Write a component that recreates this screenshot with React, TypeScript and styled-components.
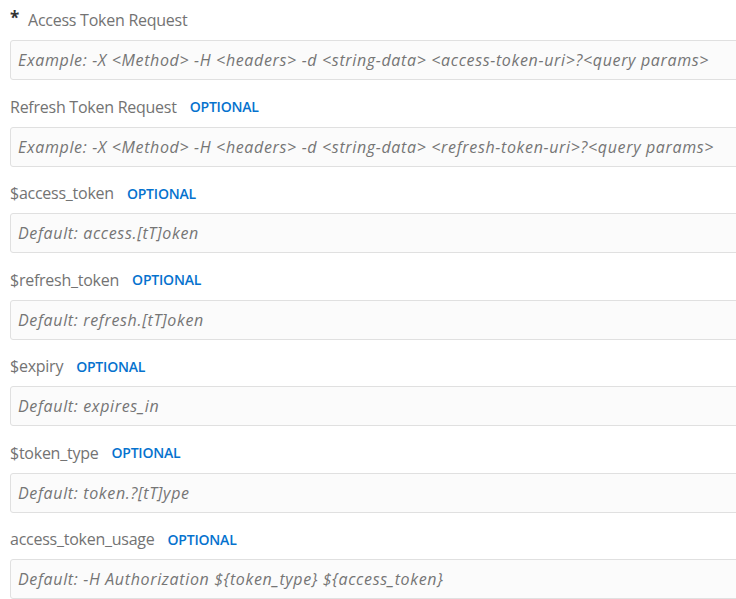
import React from "react";
import styled, { createGlobalStyle } from "styled-components";

const Global = createGlobalStyle`
  html, body { margin: 0; padding: 0; overflow: hidden; background: #ffffff; }
  body { font-family: "Open Sans", "Noto Sans", "Liberation Sans", sans-serif; }
`;

const Page = styled.div`
  padding: 8px 0 0 10px;
  width: 770px;
  display: flex;
  flex-direction: column;
`;

const Field = styled.div`
  display: flex;
  flex-direction: column;
  gap: 8px;
  margin-bottom: 14.5px;
`;

const LabelRow = styled.div`
  display: flex;
  align-items: center;
  height: 24px;
  gap: 13px;
`;

const Label = styled.label`
  font-size: 16px;
  color: #737373;
  letter-spacing: -0.25px;
  display: flex;
  align-items: center;
  gap: 9px;
  white-space: nowrap;
`;

const Star = styled.span`
  color: #333333;
  font-size: 17px;
  font-weight: 700;
  line-height: 1;
  position: relative;
  top: -3px;
`;

const Optional = styled.span`
  font-size: 14px;
  font-weight: 600;
  color: #0572ce;
  letter-spacing: -0.2px;
`;

const Input = styled.input`
  box-sizing: border-box;
  height: 40px;
  width: 100%;
  border: 1px solid #e0e0e0;
  border-radius: 3px;
  background: #fbfbfb;
  padding: 0 7px;
  font-family: inherit;
  font-size: 16px;
  font-style: italic;
  letter-spacing: 0.65px;
  color: #333;
  outline: none;
  &::placeholder {
    color: #757575;
    font-style: italic;
    opacity: 1;
  }
`;

type F = { label: string; required?: boolean; placeholder: string };

const fields: F[] = [
  {
    label: "Access Token Request",
    required: true,
    placeholder:
      "Example: -X <Method> -H <headers> -d <string-data> <access-token-uri>?<query params>",
  },
  {
    label: "Refresh Token Request",
    placeholder:
      "Example: -X <Method> -H <headers> -d <string-data> <refresh-token-uri>?<query params>",
  },
  { label: "$access_token", placeholder: "Default: access.[tT]oken" },
  { label: "$refresh_token", placeholder: "Default: refresh.[tT]oken" },
  { label: "$expiry", placeholder: "Default: expires_in" },
  { label: "$token_type", placeholder: "Default: token.?[tT]ype" },
  {
    label: "access_token_usage",
    placeholder: "Default: -H Authorization ${token_type} ${access_token}",
  },
];

export default function App() {
  return (
    <>
      <Global />
      <Page>
        {fields.map((f) => (
          <Field key={f.label}>
            <LabelRow>
              <Label>
                {f.required && <Star>*</Star>}
                {f.label}
              </Label>
              {!f.required && <Optional>OPTIONAL</Optional>}
            </LabelRow>
            <Input placeholder={f.placeholder} />
          </Field>
        ))}
      </Page>
    </>
  );
}
